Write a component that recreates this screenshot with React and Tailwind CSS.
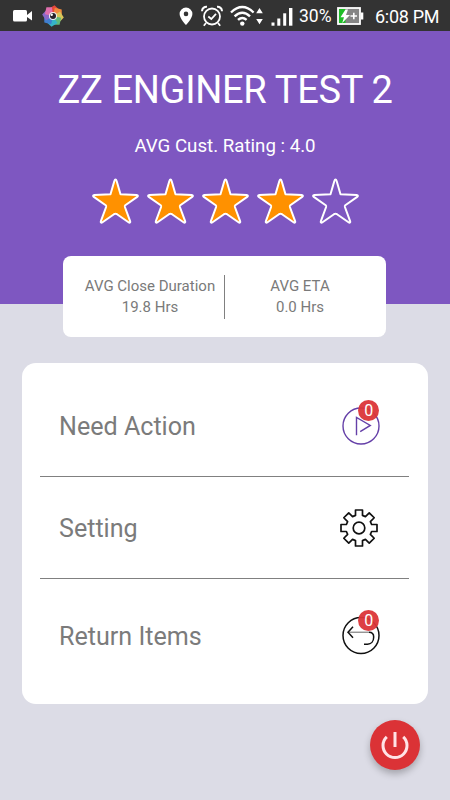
const FONT = "font-['Roboto','Liberation_Sans',sans-serif]";

const PETALS = ['#e8483a', '#f08a3c', '#d9c65a', '#5fb97a', '#35b5c9', '#3f7fd0', '#8a68c8', '#df6fae'];

const MENU = [
  { label: 'Need Action', icon: PlayIcon, badge: 0, row: 'h-[114px] pt-[13px]' },
  { label: 'Setting', icon: GearIcon, row: 'h-[102px] pt-px' },
  { label: 'Return Items', icon: ReturnIcon, badge: 0, row: 'h-[114px]' },
];

// one tooth, repeated every 45 degrees around the hub
function gearPath() {
  const tooth = [[-3.5, -12.6], [-3.5, -18], [3.5, -18], [3.5, -12.6]];
  const points = [];
  for (let i = 0; i < 8; i++) {
    const a = (i * Math.PI) / 4;
    tooth.forEach(([x, y]) => {
      const px = x * Math.cos(a) - y * Math.sin(a);
      const py = x * Math.sin(a) + y * Math.cos(a);
      points.push(`${px.toFixed(2)} ${py.toFixed(2)}`);
    });
  }
  return `M${points.join('L')}Z`;
}

function PlayIcon() {
  return (
    <svg width="40" height="40" viewBox="-20 -20 40 40" fill="none" stroke="#6540a8" strokeWidth="1.4">
      <circle r="18" />
      <path d="M-4.5 9.3V-8.6L9.3-.6L-.8 5.7" />
    </svg>
  );
}

function GearIcon() {
  return (
    <svg className="-ml-[2px] mr-[2px]" width="40" height="40" viewBox="-20 -20 40 40" fill="none" stroke="#111" strokeWidth="1.7" strokeLinejoin="round">
      <path d={gearPath()} />
      <circle r="5.8" />
    </svg>
  );
}

function ReturnIcon() {
  return (
    <svg width="40" height="40" viewBox="-20 -19.5 40 40" fill="none" stroke="#111" strokeWidth="1.5">
      <circle r="18" />
      <path d="M-12.5-3.3H8" stroke="#666" strokeWidth="1" />
      <path d="M-8-8.8L-13-3.3L-8 2.2M8-3.3C11-3.3 12.7-1.5 12.7 1.5C12.7 6 10 8.7 6.5 8.7H3" />
    </svg>
  );
}

function Star({ filled }) {
  return (
    <svg width="55" height="50" viewBox="0 0 55 50" stroke="#fff" strokeWidth="2" strokeLinejoin="round">
      <path
        d="M27.5 3.5C28.3 3.5 28.5 4.5 28.8 5.5L32.5 18.3L48.6 18.9C50.2 19 50.2 20.2 49.2 20.9L37.3 29.3C36.8 29.8 36.7 30.3 36.9 31L42.2 45.3C42.6 46.8 41.5 47 40.5 46.3L29 38.2Q27.5 37.2 26 38.2L14.5 46.3C13.5 47 12.4 46.8 12.8 45.3L18.1 31C18.3 30.3 18.2 29.8 17.7 29.3L5.8 20.9C4.8 20.2 4.8 19 6.4 18.9L22.5 18.3L26.2 5.5C26.5 4.5 26.7 3.5 27.5 3.5Z"
        fill={filled ? '#ff9100' : 'none'}
      />
    </svg>
  );
}

function StatusBar() {
  return (
    <div className="flex h-[31px] items-center bg-[#333] pl-[12px] pr-[12px] text-white">
      <svg className="mr-[9px] shrink-0" width="21" height="16" viewBox="0 0 21 16" fill="#fff">
        <rect x="1" y="2" width="14" height="11.5" rx="1.5" />
        <path d="M15 7L20 3V12.5L15 9Z" />
      </svg>
      <svg className="shrink-0" width="22" height="24" viewBox="-11 -12 22 24">
        {PETALS.map((color, i) => (
          <path key={color} d="M0 0L-4.5-7L1.5-10.8L5.5-7Z" fill={color} transform={`rotate(${i * 45})`} />
        ))}
        <circle r="4" fill="#f1eef0" />
        <circle r="3" fill="#26232b" />
        <circle cx="-1.3" cy="-1.3" r="1.2" fill="#fff" />
      </svg>
      <div className="ml-auto flex items-center">
        <svg width="14" height="20" viewBox="0 0 14 20">
          <path d="M7 1.5A6.4 6.4 0 0 0 .6 8C.6 12.5 7 19 7 19S13.4 12.5 13.4 8A6.4 6.4 0 0 0 7 1.5ZM7 5.6A2.3 2.3 0 1 1 7 10.2A2.3 2.3 0 0 1 7 5.6Z" fill="#fff" />
        </svg>
        <svg className="ml-[8px]" width="22" height="22" viewBox="0 0 22 22" fill="none" stroke="#fff" strokeWidth="1.8">
          <circle cx="11" cy="11.5" r="8" />
          <path d="M7.3 11.5L10.3 14L15 8.8M5 18L2.8 20.7M17 18L19.2 20.7" />
          <path d="M1 6.2C1 3.4 3.2 1.6 6 1.8M21 6.2C21 3.4 18.8 1.6 16 1.8" strokeWidth="2" />
        </svg>
        <svg className="ml-[7px]" width="33" height="22" viewBox="0 0 33 22" fill="none" stroke="#fff" strokeWidth="2.4">
          <path d="M1 7.5Q12.3-3.5 23.6 7.5M4.6 11.3Q12.3 4 20 11.3M8 14.9Q12.3 11 16.6 14.9" />
          <circle cx="12.3" cy="18.6" r="2.2" fill="#fff" stroke="none" />
          <path d="M29.5 3L32.8 8.2H26.2ZM29.5 19.3L32.8 14H26.2Z" fill="#fff" stroke="none" />
        </svg>
        <svg className="ml-[8px] mt-[2px]" width="22" height="20" viewBox="0 0 22 20" fill="#fff">
          <rect x="0.5" y="15.5" width="3" height="3.2" />
          <rect x="6.3" y="11.5" width="3" height="7.2" />
          <rect x="12.2" y="6.3" width="3" height="12.4" />
          <rect x="18" y="1" width="3.4" height="17.7" />
        </svg>
        <span className="ml-[6px] mt-[2px] w-[33px] whitespace-nowrap text-[17.5px] leading-none">30%</span>
        <svg className="ml-[5px]" width="27" height="20" viewBox="0 0 27 20">
          <rect x="1" y="2" width="22" height="16" fill="#858585" stroke="#fff" strokeWidth="1.8" />
          <rect x="2" y="3" width="6.5" height="14" fill="#1fbd27" />
          <rect x="23.8" y="6.5" width="2.5" height="7" fill="#fff" />
          <path d="M8.5 3.5L3.5 11.3H7L5.2 17L13 9H9L11 3.5ZM16 6.7H17.6V9.2H20V10.8H17.6V13.3H16V10.8H13.5V9.2H16Z" fill="#fff" />
        </svg>
        <span className="ml-[11px] mt-[2px] w-[63px] whitespace-nowrap text-[18px] leading-none tracking-[-0.3px]">6:08 PM</span>
      </div>
    </div>
  );
}

function Stat({ label, value, className }) {
  return (
    <div className={`text-center text-[15px] leading-[20.5px] ${className}`}>
      <p>{label}</p>
      <p>{value}</p>
    </div>
  );
}

export default function App() {
  return (
    <div className={`flex h-[800px] w-[450px] flex-col overflow-hidden bg-[#dcdce6] ${FONT}`}>
      <StatusBar />

      <header className="flex h-[272.5px] shrink-0 flex-col items-center bg-[#7e57c1] text-white">
        <h1 className="mt-[36px] whitespace-nowrap text-[38px] leading-[46px] tracking-[-0.3px]">ZZ ENGINER TEST 2</h1>
        <p className="mt-[22px] text-[18.7px] leading-[22px]">AVG Cust. Rating : 4.0</p>
        <div className="mt-[19px] flex">
          {[1, 2, 3, 4, 5].map((n) => (
            <Star key={n} filled={n <= 4} />
          ))}
        </div>
      </header>

      <section className="relative ml-[63px] -mt-[47.5px] flex h-[81px] w-[323px] shrink-0 items-center rounded-lg bg-white text-[#7a7a7a]">
        <Stat label="AVG Close Duration" value="19.8 Hrs" className="ml-[13px] w-[148px]" />
        <div className="h-[44px] w-px bg-[#808080]" />
        <Stat label="AVG ETA" value="0.0 Hrs" className="ml-px w-[148px]" />
      </section>

      <nav className="mt-[25.5px] ml-[22px] h-[341px] w-[406px] shrink-0 rounded-[14px] bg-white pl-[18px] pr-[19px] text-[#7b7b7b]">
        {MENU.map(({ label, icon: Icon, badge, row }, i) => (
          <div key={label} className={`flex items-center justify-between pl-[19px] pr-[28.5px] ${row} ${i < 2 ? 'border-b border-[#808080]' : ''}`}>
            <span className="mt-[2px] text-[25.1px] leading-none">{label}</span>
            <span className="relative">
              <Icon />
              {badge !== undefined && (
                <span className="absolute -top-[5.5px] left-[17.8px] flex size-[21px] items-center justify-center rounded-full bg-[#db3538]/95 text-[16px] leading-none text-white">
                  {badge}
                </span>
              )}
            </span>
          </div>
        ))}
      </nav>

      <button
        type="button"
        aria-label="Power"
        className="mt-[16px] ml-[370px] flex size-[50px] shrink-0 items-center justify-center rounded-full bg-[#db3236] shadow-[0_4px_7px_rgba(0,0,0,0.25)]"
      >
        <svg width="32" height="32" viewBox="-16 -16 32 32" fill="none" stroke="#ffe3e6" strokeWidth="3">
          <path d="M0-13V2M-8.2-8.2A12 12 0 1 0 8.2-8.2" />
        </svg>
      </button>
    </div>
  );
}
